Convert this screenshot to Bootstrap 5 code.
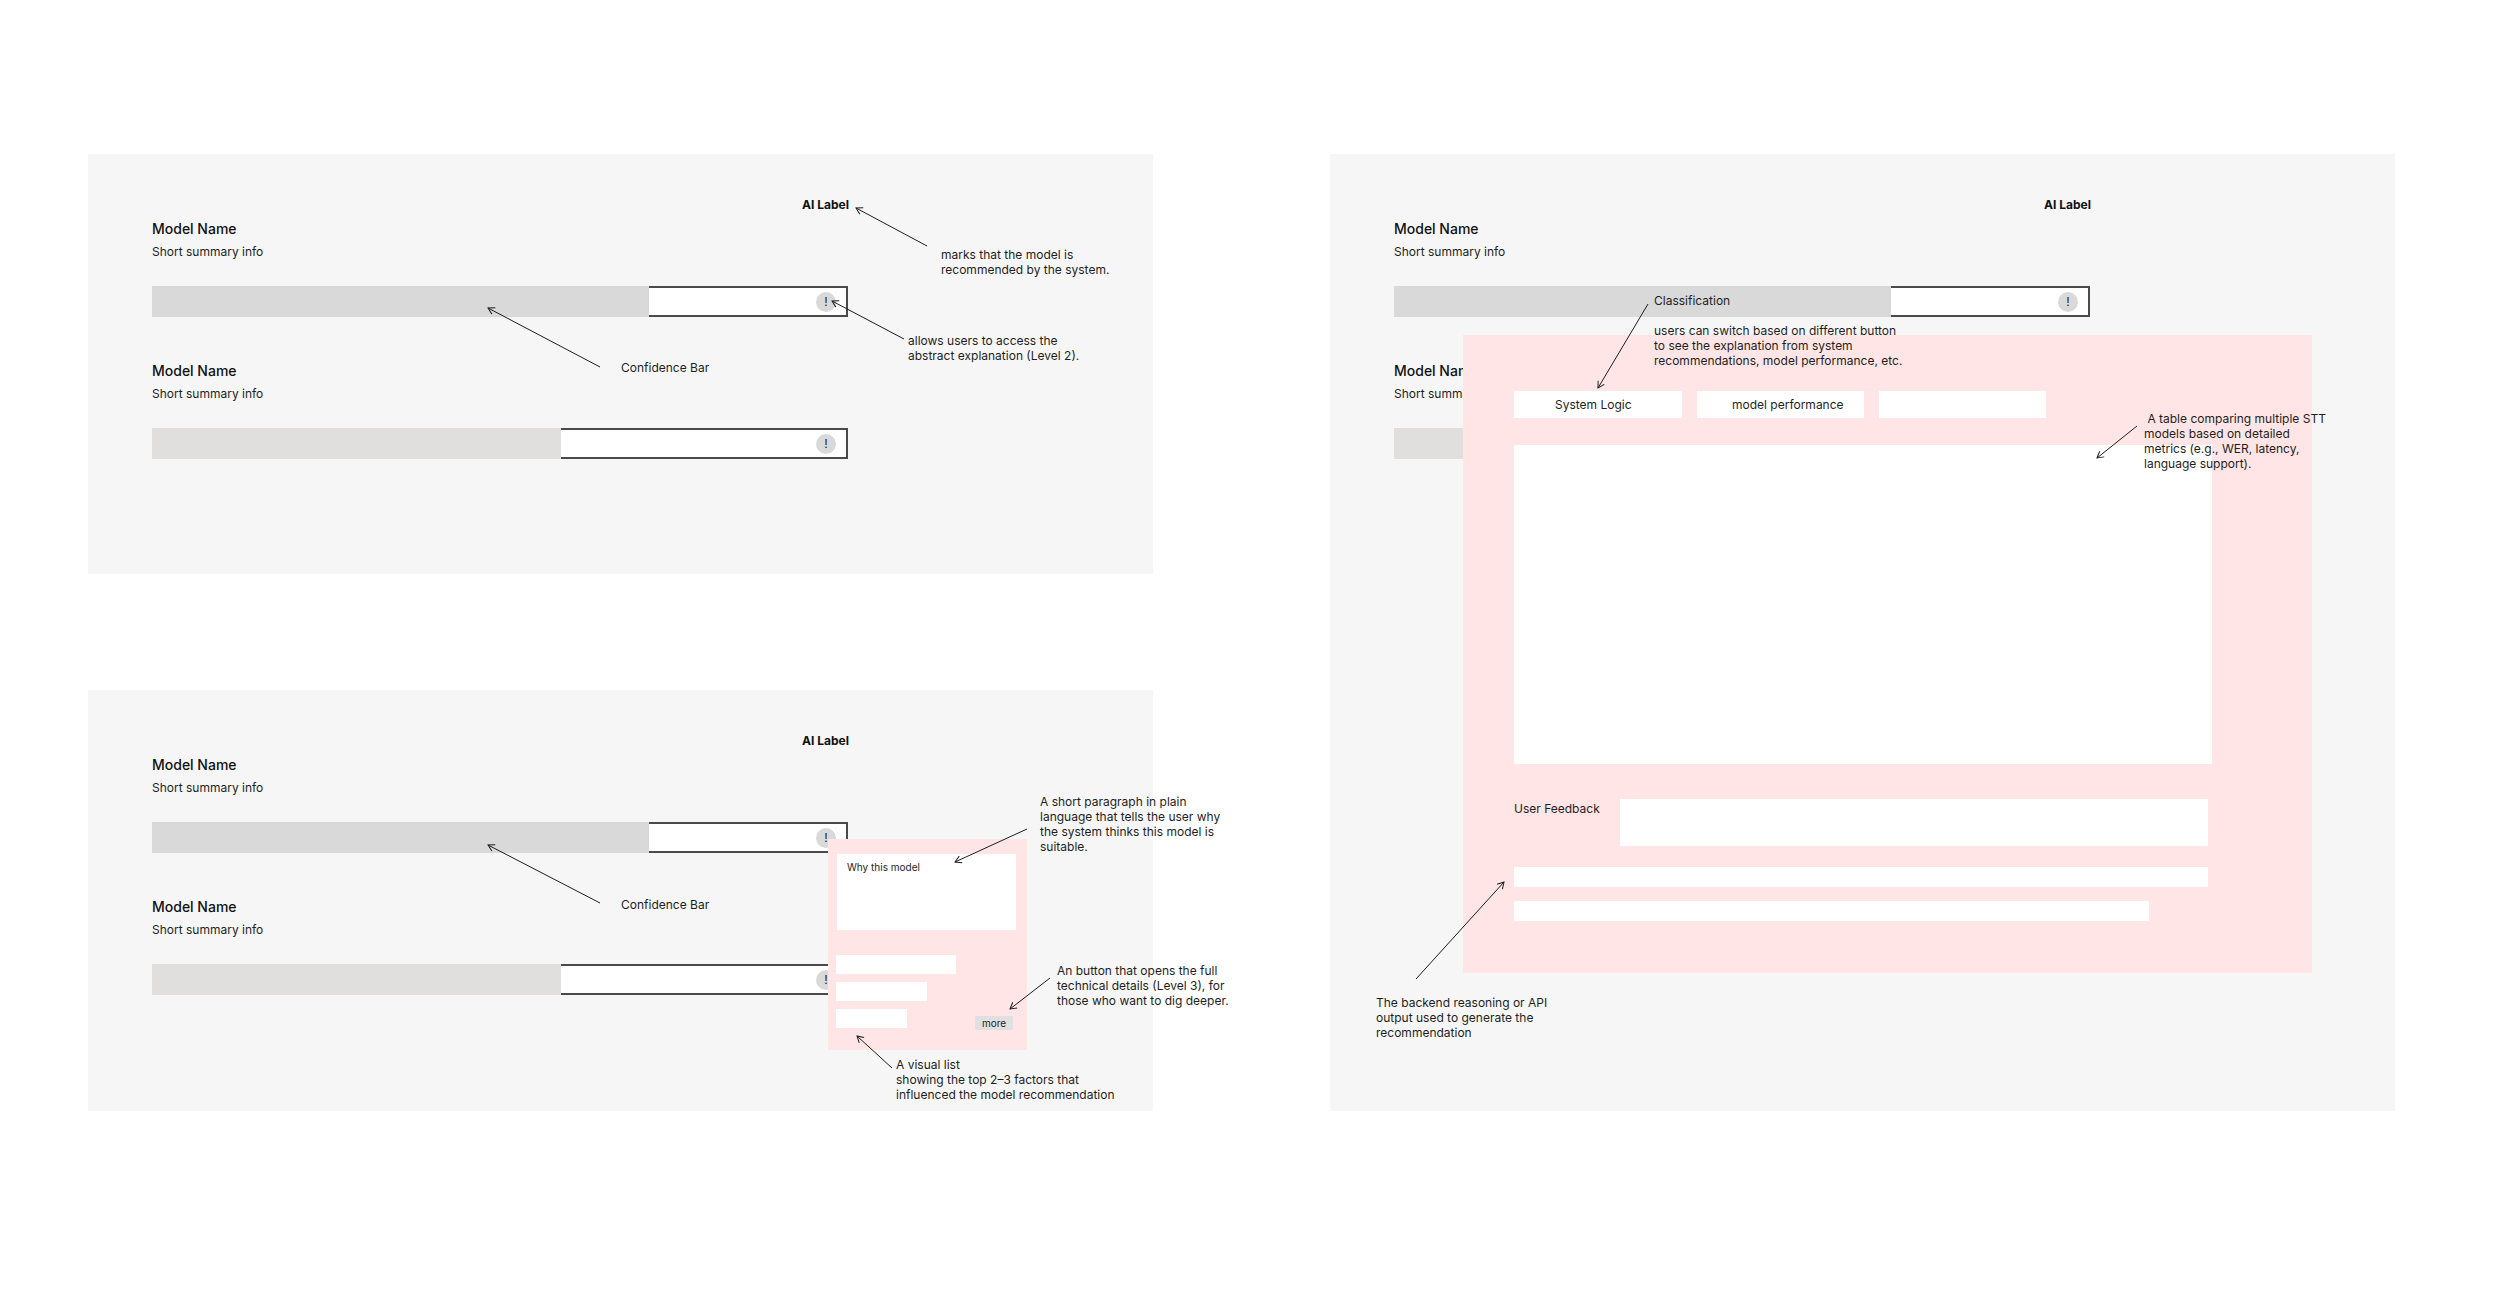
<!DOCTYPE html>
<html lang="en">
<head>
    <meta charset="UTF-8">
    <title>Model recommendation wireframes</title>
    <link href="https://cdn.jsdelivr.net/npm/bootstrap@5.3.3/dist/css/bootstrap.min.css" rel="stylesheet">
    <style>
        body { font-family: Inter, "Liberation Sans", sans-serif; color: #1e1e1e; background: #fff; }
        .page-wrap { padding: 154px 0 0 88px; gap: 177px; }
        .left-col { width: 1065px; gap: 116px; }
        .frame { background: #f6f6f6; width: 1065px; padding: 43px 0 0 64px; }
        .frame-short { height: 420px; }
        .frame-short-b { height: 421px; }
        .frame-tall { height: 957px; }
        .widget { width: 696px; }
        .ai-label { font-size: 12px; font-weight: 700; line-height: 16px; margin-right: -1px; margin-bottom: 6px; color: #111; }
        .model-name { font-size: 14px; font-weight: 500; line-height: 20px; color: #111; }
        .model-info { font-size: 12px; line-height: 16px; margin-top: 5px; margin-bottom: 26px; }
        .conf-bar { height: 31px; background: transparent; }
        .conf-bar + .model-name { margin-top: 44px; }
        .conf-fill-a { width: 497px; background: #d9d9d9; }
        .conf-fill-b { width: 409px; background: #e0dfdd; }
        .conf-rest { background: #fff; border: 2px solid #4a4a4a; border-left: 0; padding-right: 10px; }
        .info-dot { width: 20px; height: 20px; background: #d9d9d9; font-size: 12px; line-height: 1; }

        /* popovers */
        .pop-small { left: 740px; top: 149px; width: 199px; height: 211px; background: #ffe5e5; padding: 15px 0 0 8px; }
        .why-box { width: 179px; height: 76px; margin: 0 0 25px 1px; background: #fff; font-size: 10px; line-height: 14px; padding: 6px 10px; }
        .fact-list { gap: 8px; padding-right: 14px; }
        .fact-item { height: 19px; background: #fff; }
        .fact-a { width: 120px; }
        .fact-b { width: 91px; }
        .fact-c { width: 71px; }
        .more-btn { width: 38px; height: 14px; margin-top: 7px; padding: 0; border: 0; background: #e0e0e0; font-size: 10px; line-height: 14px; color: #1e1e1e; }
        .pop-large { left: 133px; top: 181px; width: 849px; height: 638px; background: #ffe5e5; padding: 56px 0 0 51px; }
        .tab-row { gap: 15px; margin-bottom: 27px; }
        .tab-box { width: 167px; height: 27px; padding: 0; border: 0; background: #fff; font-size: 12px; line-height: 27px; color: #1e1e1e; }
        .tab-box:first-child { width: 168px; padding-left: 41px; }
        .tab-pad { padding-left: 35px; }
        .table-box { width: 698px; height: 319px; background: #fff; margin-bottom: 35px; }
        .feedback-label { width: 106px; font-size: 12px; line-height: 16px; padding-top: 2px; }
        .feedback-box { width: 588px; height: 47px; background: #fff; }
        .out-line { height: 20px; background: #fff; }
        .out-a { width: 694px; margin: 21px 0 14px; }
        .out-b { width: 635px; }

        /* annotations */
        .note { position: absolute; font-size: 12px; line-height: 15px; white-space: nowrap; color: #1e1e1e; }
        .arrows { position: absolute; left: 0; top: 0; width: 100%; height: 100%; overflow: visible; pointer-events: none; }
        .arrows line { stroke: #1e1e1e; stroke-width: 1; }
        .n-marks { left: 853px; top: 93px; }
        .n-allows { left: 820px; top: 179px; }
        .n-conf { left: 533px; top: 206px; }
        .n-conf-b { left: 533px; top: 207px; }
        .n-para { left: 952px; top: 104px; }
        .n-more { left: 969px; top: 273px; }
        .n-list { left: 808px; top: 367px; }
        .n-class { left: 324px; top: 139px; }
        .n-switch { left: 324px; top: 169px; }
        .n-table { left: 814px; top: 257px; }
        .n-backend { left: 46px; top: 841px; }
    </style>
</head>
<body>
<div class="page-wrap d-flex align-items-start">
    <div class="left-col d-flex flex-column">

        <!-- level 1 -->
        <section class="frame frame-short position-relative">
            <div class="widget">
                <div class="ai-label text-end">AI Label</div>
                <div class="model-name">Model Name</div>
                <div class="model-info">Short summary info</div>
                <div class="conf-bar d-flex">
                    <div class="conf-fill-a"></div>
                    <div class="conf-rest flex-grow-1 d-flex align-items-center justify-content-end"><span class="info-dot rounded-circle d-flex align-items-center justify-content-center">!</span></div>
                </div>
                <div class="model-name">Model Name</div>
                <div class="model-info">Short summary info</div>
                <div class="conf-bar d-flex">
                    <div class="conf-fill-b"></div>
                    <div class="conf-rest flex-grow-1 d-flex align-items-center justify-content-end"><span class="info-dot rounded-circle d-flex align-items-center justify-content-center">!</span></div>
                </div>
            </div>
            <svg class="arrows">
                <defs>
                    <marker id="arrowHead" viewBox="0 0 10 10" refX="9" refY="5" markerWidth="9" markerHeight="9" markerUnits="userSpaceOnUse" orient="auto">
                        <path d="M2 1L9 5L2 9" fill="none" stroke="#1e1e1e" stroke-width="1.1"/>
                    </marker>
                </defs>
                <line x1="839" y1="92" x2="768" y2="54" marker-end="url(#arrowHead)"/>
                <line x1="816" y1="185" x2="744" y2="147" marker-end="url(#arrowHead)"/>
                <line x1="512" y1="213" x2="400" y2="154" marker-end="url(#arrowHead)"/>
            </svg>
            <div class="note n-marks">marks that the model is<br>recommended by the system.</div>
            <div class="note n-allows">allows users to access the<br>abstract explanation (Level 2).</div>
            <div class="note n-conf">Confidence Bar</div>
        </section>

        <!-- level 2 -->
        <section class="frame frame-short-b position-relative">
            <div class="widget">
                <div class="ai-label text-end">AI Label</div>
                <div class="model-name">Model Name</div>
                <div class="model-info">Short summary info</div>
                <div class="conf-bar d-flex">
                    <div class="conf-fill-a"></div>
                    <div class="conf-rest flex-grow-1 d-flex align-items-center justify-content-end"><span class="info-dot rounded-circle d-flex align-items-center justify-content-center">!</span></div>
                </div>
                <div class="model-name">Model Name</div>
                <div class="model-info">Short summary info</div>
                <div class="conf-bar d-flex">
                    <div class="conf-fill-b"></div>
                    <div class="conf-rest flex-grow-1 d-flex align-items-center justify-content-end"><span class="info-dot rounded-circle d-flex align-items-center justify-content-center">!</span></div>
                </div>
            </div>
            <div class="pop-small position-absolute">
                <div class="why-box">Why this model</div>
                <div class="fact-list d-flex flex-column">
                    <div class="fact-item fact-a"></div>
                    <div class="fact-item fact-b"></div>
                    <div class="d-flex justify-content-between align-items-start">
                        <div class="fact-item fact-c"></div>
                        <button type="button" class="more-btn btn rounded-0">more</button>
                    </div>
                </div>
            </div>
            <svg class="arrows">
                <line x1="512" y1="213" x2="400" y2="155" marker-end="url(#arrowHead)"/>
                <line x1="939" y1="139" x2="867" y2="172" marker-end="url(#arrowHead)"/>
                <line x1="962" y1="288" x2="922" y2="319" marker-end="url(#arrowHead)"/>
                <line x1="804" y1="378" x2="769" y2="346" marker-end="url(#arrowHead)"/>
            </svg>
            <div class="note n-conf-b">Confidence Bar</div>
            <div class="note n-para">A short paragraph in plain<br>language that tells the user why<br>the system thinks this model is<br>suitable.</div>
            <div class="note n-more">An button that opens the full<br>technical details (Level 3), for<br>those who want to dig deeper.</div>
            <div class="note n-list">A visual list<br>showing the top 2–3 factors that<br>influenced the model recommendation</div>
        </section>
    </div>

    <!-- level 3 -->
    <section class="frame frame-tall position-relative">
        <div class="widget">
            <div class="ai-label text-end">AI Label</div>
            <div class="model-name">Model Name</div>
            <div class="model-info">Short summary info</div>
            <div class="conf-bar d-flex">
                <div class="conf-fill-a"></div>
                <div class="conf-rest flex-grow-1 d-flex align-items-center justify-content-end"><span class="info-dot rounded-circle d-flex align-items-center justify-content-center">!</span></div>
            </div>
            <div class="model-name">Model Name</div>
            <div class="model-info">Short summary info</div>
            <div class="conf-bar d-flex">
                <div class="conf-fill-b"></div>
                <div class="conf-rest flex-grow-1 d-flex align-items-center justify-content-end"><span class="info-dot rounded-circle d-flex align-items-center justify-content-center">!</span></div>
            </div>
        </div>
        <div class="pop-large position-absolute">
            <div class="tab-row d-flex">
                <button type="button" class="tab-box btn rounded-0 text-start">System Logic</button>
                <button type="button" class="tab-box tab-pad btn rounded-0 text-start">model performance</button>
                <button type="button" class="tab-box btn rounded-0" aria-label="empty tab"></button>
            </div>
            <div class="table-box"></div>
            <div class="d-flex">
                <div class="feedback-label">User Feedback</div>
                <div class="feedback-box"></div>
            </div>
            <div class="out-line out-a"></div>
            <div class="out-line out-b"></div>
        </div>
        <svg class="arrows">
            <line x1="318" y1="150" x2="268" y2="234" marker-end="url(#arrowHead)"/>
            <line x1="807" y1="272" x2="767" y2="304" marker-end="url(#arrowHead)"/>
            <line x1="86" y1="825" x2="174" y2="728" marker-end="url(#arrowHead)"/>
        </svg>
        <div class="note n-class">Classification</div>
        <div class="note n-switch">users can switch based on different button<br>to see the explanation from system<br>recommendations, model performance, etc.</div>
        <div class="note n-table">&nbsp;A table comparing multiple STT<br>models based on detailed<br>metrics (e.g., WER, latency,<br>language support).</div>
        <div class="note n-backend">The backend reasoning or API<br>output used to generate the<br>recommendation</div>
    </section>
</div>
<script src="https://cdn.jsdelivr.net/npm/bootstrap@5.3.3/dist/js/bootstrap.bundle.min.js"></script>
</body>
</html>
